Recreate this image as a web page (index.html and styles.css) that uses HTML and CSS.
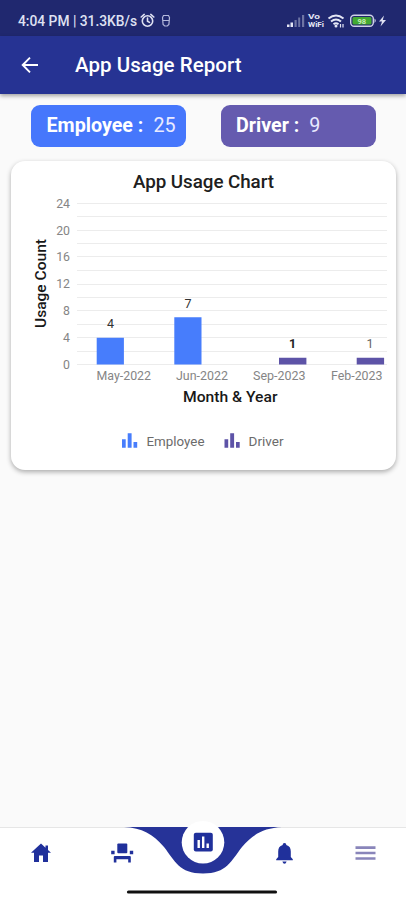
FILE: index.html
```html
<!DOCTYPE html>
<html lang="en">
<head>
<meta charset="utf-8">
<title>App Usage Report</title>
<link rel="stylesheet" href="styles.css">
</head>
<body>
<div class="screen">
  <div class="status">
    <svg width="406" height="36" viewBox="0 0 406 36">
      <g class="status-text">
        <text x="18" y="26" textLength="119" lengthAdjust="spacingAndGlyphs">4:04 PM | 31.3KB/s</text>
      </g>
      <g fill="none" stroke="#dfe1f2" stroke-width="1.6" stroke-linecap="round">
        <circle cx="147.500" cy="21" r="5.200"/>
        <path d="M147.500 18v3.200l2 1.200M141.200 17l3-2.600M153.800 17l-3-2.600"/>
        <path d="M163.500 15.500h5l1 2-.6 7-1.600 1.500h-2.600l-1.600-1.500-.6-7zM163.500 20.500h5.500" stroke="#b4b8dc" stroke-width="1.200"/>
      </g>
      <g fill="#e4e6f5">
        <path d="M287 24.500h2.500v2.500H287zM290.500 22.500h2.500v4.500h-2.500z"/>
        <path d="M294.500 20h2.200v7h-2.200zM298.200 17.500h2v9.500h-2zM302 15h2.200v12H302z" opacity=".4"/>
        <text class="vo" x="308" y="18.800" textLength="12" lengthAdjust="spacingAndGlyphs">Vo</text>
        <text class="vo" x="308" y="27.300" textLength="16" lengthAdjust="spacingAndGlyphs">WiFi</text>
      </g>
      <g fill="none" stroke="#e4e6f5" stroke-width="2">
        <path d="M328.500 18.500q7.500-6 15 0M331 21.500q5-4 10 0M333.500 24.300q2.500-2 5 0"/>
        <path d="M340.500 24v3.500M343 27.500V24" stroke-width="1.200"/>
      </g>
      <circle cx="336" cy="26" r="1.500" fill="#e4e6f5"/>
      <rect x="350.700" y="15.200" width="22.600" height="11" rx="3.500" fill="#20266a" stroke="#cfd2e8" stroke-width="1.400"/>
      <rect x="352.500" y="17" width="19" height="7.500" rx="1.500" fill="#43aa32"/>
      <path d="M374.500 18.500q2.500 2 0 4.500z" fill="#cfd2e8"/>
      <text class="battery" x="357.500" y="23.800">98</text>
      <path d="M384 15.500l-5 6h3l-1.500 5 5.500-6.500h-3.200z" fill="#dfe1f2"/>
    </svg>
  </div>
  <header class="appbar">
    <svg class="back" width="18" height="18" viewBox="0 0 18 18"><path d="M17 9H2M9 1.700L1.700 9 9 16.300" fill="none" stroke="#fff" stroke-width="1.900"/></svg>
    <h1>App Usage Report</h1>
  </header>
  <main>
    <div class="pills">
      <div class="pill employee"><b>Employee :</b><span>25</span></div>
      <div class="pill driver"><b>Driver :</b><span>9</span></div>
    </div>
    <section class="card">
      <svg width="385" height="309" viewBox="11 161 385 309">
        <text class="title" x="133" y="188" textLength="141">App Usage Chart</text>
        <path class="grid" d="M77 203.500H387M77 216.500H387M77 230.500H387M77 243.500H387M77 256.500H387M77 270.500H387M77 284.500H387M77 297.500H387M77 310.500H387M77 324.500H387M77 337.500H387M77 351.500H387M77 364.500H387"/>
        <g class="tick" text-anchor="end">
          <text x="70" y="207.500">24</text><text x="70" y="234.500">20</text><text x="70" y="261">16</text><text x="70" y="288">12</text><text x="70" y="315">8</text><text x="70" y="342">4</text><text x="70" y="369">0</text>
        </g>
        <g fill="#477dfc"><path d="M96.700 337.700h27.200v26.800H96.700zM174.300 317.300h27.200v47.200h-27.200z"/></g>
        <g fill="#5d53a7"><path d="M279 357.800h27.400v6.700H279zM356.700 357.800h27.400v6.700h-27.400z"/></g>
        <g class="value" text-anchor="middle">
          <text x="110.500" y="327.500">4</text><text x="188" y="307.500">7</text><text class="strong" x="292.500" y="347.500">1</text><text class="light" x="370" y="347.500">1</text>
        </g>
        <g class="tick">
          <text x="96.500" y="379.500" textLength="54.500" lengthAdjust="spacingAndGlyphs">May-2022</text><text x="176" y="379.500" textLength="52" lengthAdjust="spacingAndGlyphs">Jun-2022</text><text x="253" y="379.500" textLength="52.500" lengthAdjust="spacingAndGlyphs">Sep-2023</text><text x="331" y="379.500" textLength="51.500" lengthAdjust="spacingAndGlyphs">Feb-2023</text>
        </g>
        <text class="axis" x="183" y="401.500" textLength="94.500" lengthAdjust="spacingAndGlyphs">Month &amp; Year</text>
        <text class="axis" transform="translate(46 328) rotate(-90)" textLength="89" lengthAdjust="spacingAndGlyphs">Usage Count</text>
        <path d="M122 439.300h3.700v8.500H122zM127.700 433.300h3.900v14.500h-3.900zM133.500 442h3.700v5.800h-3.700z" fill="#477dfc"/>
        <text class="legend" x="146.500" y="446.300" textLength="58" lengthAdjust="spacingAndGlyphs">Employee</text>
        <path d="M224.500 439.300h3.700v8.500h-3.700zM230.200 433.300h3.900v14.500h-3.900zM236 442h3.700v5.800H236z" fill="#5d53a7"/>
        <text class="legend" x="248.500" y="446.300" textLength="35" lengthAdjust="spacingAndGlyphs">Driver</text>
      </svg>
    </section>
  </main>
  <nav class="nav">
    <svg width="406" height="80" viewBox="0 820 406 80">
      <path d="M0 828H406V900H0z" fill="#fff"/>
      <path d="M0 827.500H406" stroke="#e6e6e6"/>
      <path d="M124 827H282C264 828 253 834 242 847C231 861 227 873.500 203 873.500C179 873.500 175 861 164 847C153 834 142 828 124 827z" fill="#263398"/>
      <circle cx="203" cy="842.300" r="21.300" fill="#fff"/>
      <g fill="#20309b">
        <path d="M41 843.500L31 852.800h3V862h5v-6.500h4V862h5v-9.200h3L48 850v-4.500h-2.500v2.200z"/>
        <rect x="117.300" y="843.500" width="10" height="9.800" rx="1"/>
        <path d="M113.800 857q0-1 1-1h15q1 0 1 1v5.500h-2.600v-3.300h-11.800v3.300h-2.600zM111.200 850.800h3.400v3.400h-3.400zM129.800 850.800h3.400v3.400h-3.400z"/>
        <path d="M284.500 843c1.200 0 1.800.8 1.800 2 3.200.8 4.500 3.200 4.500 6.500v5.500l2 2.300v1h-16.600v-1l2-2.300v-5.500c0-3.300 1.300-5.700 4.500-6.500 0-1.200.6-2 1.800-2zM282.400 861.500h4.200q-.6 2.200-2.100 2.200t-2.100-2.200z"/>
        <rect x="193.800" y="832.800" width="19" height="18.800" rx="2"/>
      </g>
      <path d="M197.500 840h2.400v8h-2.400zM202 836.500h2.400V848H202zM206.500 843.500h2.400v4.500h-2.400z" fill="#fff"/>
      <path d="M355.500 847.600h20M355.500 853h20M355.500 858.500h20" stroke="#8985ba" stroke-width="2.600"/>
      <path d="M128.500 892H275.500" stroke="#101010" stroke-width="3.200" stroke-linecap="round"/>
    </svg>
  </nav>
</div>
</body>
</html>
```
FILE: styles.css
```css
* { box-sizing: border-box; }
body { margin: 0; font-family: Roboto, "Liberation Sans", sans-serif; }
svg { display: block; }
.screen { width: 406px; height: 900px; display: flex; flex-direction: column; background: #fafafa; overflow: hidden; }
.status { height: 36px; flex: none; background: #20286f; }
.status-text { font-size: 14px; font-weight: 500; fill: #dfe1f2; }
.vo { font-size: 7.500px; font-weight: 700; }
.battery { font-size: 7.500px; font-weight: 700; fill: #c7efb5; }
.appbar { height: 57.500px; flex: none; display: flex; align-items: center; padding: 0 0 0 21px; background: #263393; color: #fff; box-shadow: 0 2px 4px rgba(0, 0, 0, .35); }
.appbar h1 { margin: 0 0 0 36px; font-size: 20.500px; font-weight: 500; letter-spacing: .05px; white-space: nowrap; }
main { flex: 1; padding: 11.500px 10px 0 11px; }
.pills { display: flex; gap: 34.500px; padding-left: 20px; }
.pill { width: 155px; height: 41.500px; border-radius: 9px; padding-left: 15.500px; display: flex; align-items: center; gap: 10px; color: #fff; font-size: 19.700px; white-space: nowrap; }
.pill b { font-weight: 700; }
.pill span { color: #e9eaff; }
.employee { background: #4677fc; }
.driver { background: #655baf; }
.card { margin-top: 14.500px; width: 385px; height: 309px; border-radius: 14px; background: #fff; box-shadow: 0 2px 5px rgba(0, 0, 0, .32); }
.title { font-size: 18.800px; font-weight: 500; fill: #202020; }
.grid { stroke: #ececec; stroke-width: 1; fill: none; }
.tick { font-size: 12.300px; fill: #858585; }
.value { font-size: 12.500px; fill: #333; }
.value .strong { font-weight: 700; fill: #222; }
.value .light { fill: #666; }
.axis { font-size: 15px; font-weight: 500; fill: #181818; }
.legend { font-size: 13.300px; fill: #6b6b6b; }
.nav { flex: none; height: 80px; }
```
